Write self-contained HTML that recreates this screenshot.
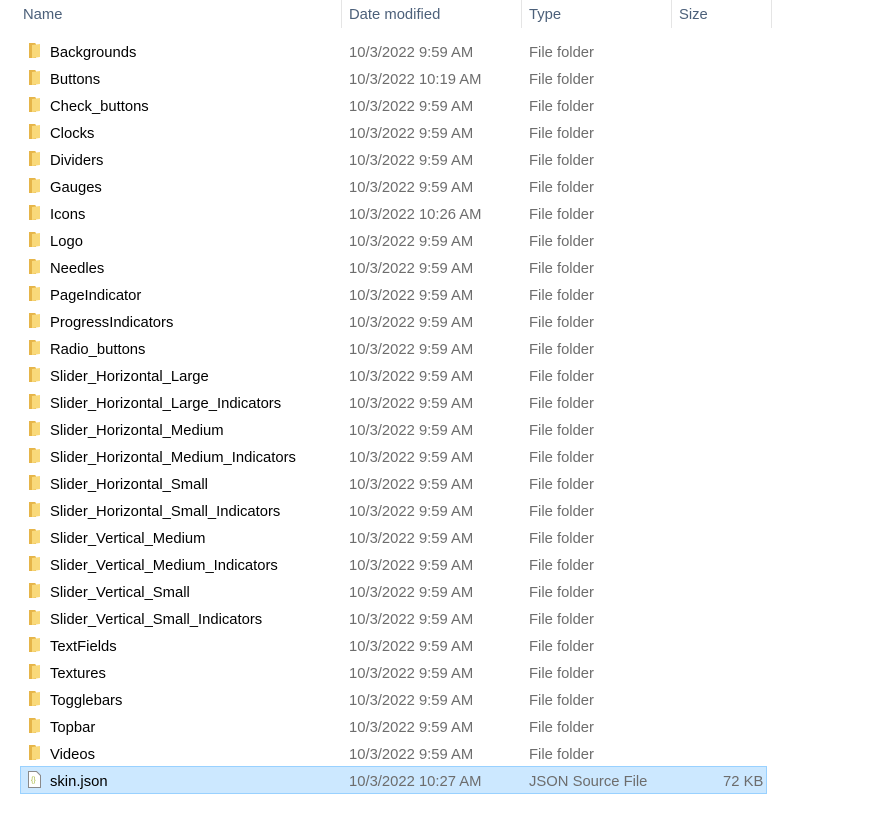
<!DOCTYPE html>
<html><head><style>
body{margin:0;width:873px;height:824px;background:#fff;font-family:"Liberation Sans",sans-serif;position:relative;overflow:hidden}
.h{position:absolute;top:7px;font-size:14.8px;color:#4c607a}
.sep{position:absolute;top:0;width:1px;height:28px;background:#e5e5e5}
.r{position:absolute;left:0;width:873px;height:27px;font-size:14.8px}
.r span{position:absolute;top:7px}
.n{left:50px;color:#000}
.d{left:349px;color:#6d6d6d}
.t{left:529px;color:#6d6d6d}
.ic{position:absolute;left:28px;top:4px}
.sel{position:absolute;left:20px;top:766px;width:745px;height:26px;background:#cce8ff;border:1px solid #99d1ff}
</style></head><body>
<div class="h" style="left:23px">Name</div>
<div style="position:absolute;left:175px;top:-6px;font-size:11px;color:#888">^</div>
<div class="h" style="left:349px">Date modified</div>
<div class="h" style="left:529px">Type</div>
<div class="h" style="left:679px">Size</div>
<div class="sep" style="left:341px"></div><div class="sep" style="left:521px"></div><div class="sep" style="left:671px"></div><div class="sep" style="left:771px"></div>
<div class="sel"></div>
<div id="rows"></div>
<script>
var f=[["Backgrounds","9:59"],["Buttons","10:19"],["Check_buttons","9:59"],["Clocks","9:59"],["Dividers","9:59"],["Gauges","9:59"],["Icons","10:26"],["Logo","9:59"],["Needles","9:59"],["PageIndicator","9:59"],["ProgressIndicators","9:59"],["Radio_buttons","9:59"],["Slider_Horizontal_Large","9:59"],["Slider_Horizontal_Large_Indicators","9:59"],["Slider_Horizontal_Medium","9:59"],["Slider_Horizontal_Medium_Indicators","9:59"],["Slider_Horizontal_Small","9:59"],["Slider_Horizontal_Small_Indicators","9:59"],["Slider_Vertical_Medium","9:59"],["Slider_Vertical_Medium_Indicators","9:59"],["Slider_Vertical_Small","9:59"],["Slider_Vertical_Small_Indicators","9:59"],["TextFields","9:59"],["Textures","9:59"],["Togglebars","9:59"],["Topbar","9:59"],["Videos","9:59"]];
var h="";
var fold='<svg class="ic" width="13" height="17" viewBox="0 0 13 17"><path d="M1 1h6l1 1v14H1z" fill="#e6b549"/><path d="M4 3l8-1v13l-8 1z" fill="#f9d97a"/></svg>';
f.forEach(function(x,i){var y=38+i*27;h+='<div class="r" style="top:'+y+'px">'+fold+'<span class="n">'+x[0]+'</span><span class="d">10/3/2022 '+x[1]+' AM</span><span class="t">File folder</span></div>';});
h+='<div class="r" style="top:767px"><svg class="ic" width="13" height="17" viewBox="0 0 13 17"><path d="M0.5 0.5h8l4 4v12h-12z" fill="#fff" stroke="#8a8a8a"/><text x="3" y="11" font-size="7" fill="#a3b53a" font-family="Liberation Sans">{}</text></svg><span class="n">skin.json</span><span class="d">10/3/2022 10:27 AM</span><span class="t">JSON Source File</span><span style="left:723px;color:#6d6d6d">72 KB</span></div>';
document.getElementById("rows").innerHTML=h;
</script>
</body></html>
